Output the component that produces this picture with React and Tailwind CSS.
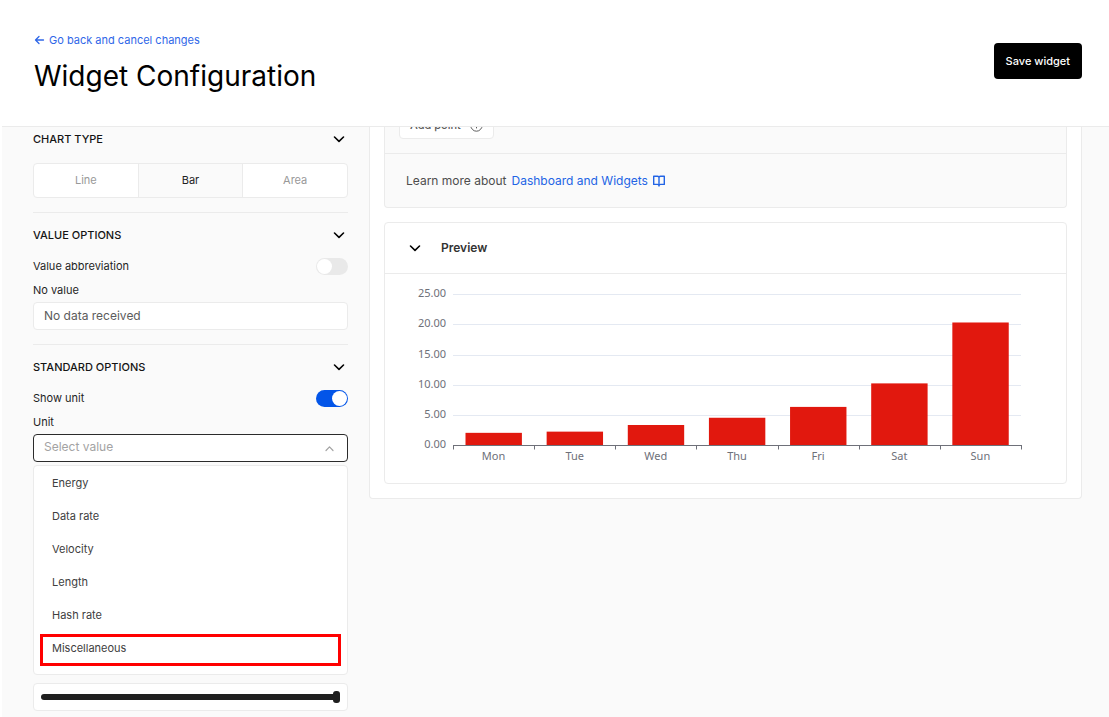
import { useState } from "react";

const UNITS = ["Energy", "Data rate", "Velocity", "Length", "Hash rate", "Miscellaneous"];
const CHART_TYPES = ["Line", "Bar", "Area"];

const TICKS = [25, 20, 15, 10, 5, 0];
const BARS = [
  { day: "Mon", value: 2.1 },
  { day: "Tue", value: 2.3 },
  { day: "Wed", value: 3.4 },
  { day: "Thu", value: 4.6 },
  { day: "Fri", value: 6.4 },
  { day: "Sat", value: 10.3 },
  { day: "Sun", value: 20.4 },
];

function Chevron({ className = "" }) {
  return (
    <svg className={className} width="12" height="12" viewBox="0 0 12 12" fill="none" stroke="currentColor" strokeWidth="1.6" strokeLinecap="round" strokeLinejoin="round" aria-hidden="true">
      <path d="M1.5 4 6 8.3 10.5 4" />
    </svg>
  );
}

function SectionTitle({ children }) {
  return (
    <h2>
      <button type="button" className="flex h-6 w-full items-center justify-between pr-[3px] text-[11px] font-medium text-[#141414]">
        {children}
        <Chevron className="text-black" />
      </button>
    </h2>
  );
}

function Toggle({ label, defaultChecked }) {
  return (
    <label className="mt-[7px] flex h-6 items-center justify-between">
      {label}
      <span className="relative flex">
        <input type="checkbox" role="switch" defaultChecked={defaultChecked} className="peer h-[17px] w-8 appearance-none rounded-full bg-[#e9e9e9] checked:bg-[#0355e8]" />
        <span className="pointer-events-none absolute top-px left-px size-[15px] rounded-full bg-white peer-checked:left-4" />
      </span>
    </label>
  );
}

function Divider() {
  return <hr className="mt-3.5 mb-2.5 border-[#ebebeb]" />;
}

function BarChart() {
  const left = 68;
  const step = 81.14;
  const base = 171.5;
  const perUnit = 6.03;
  return (
    <svg viewBox="0 0 681 209" className="block w-full font-['Noto_Sans','Open_Sans',sans-serif] text-[11px]" role="img" aria-label="Preview bar chart">
      {TICKS.map((t) => {
        const y = Math.round(base - t * perUnit - 0.5) + 0.5;
        return (
          <g key={t}>
            {t > 0 && <path d={`M${left} ${y}H636`} stroke="#e4e9f2" />}
            <text x="61" y={y + 2.5} textAnchor="end" fill="#6e7079">{t.toFixed(2)}</text>
          </g>
        );
      })}
      {BARS.map((b, i) => (
        <g key={b.day}>
          <rect x={left + i * step + 12.5} y={base - b.value * perUnit} width="56.4" height={b.value * perUnit} fill="#e1180e" />
          <text x={left + (i + 0.5) * step} y="186" textAnchor="middle" fill="#6e7079">{b.day}</text>
        </g>
      ))}
      <path d={`M${left} ${base}H637`} stroke="#6e7079" />
      {[0, 1, 2, 3, 4, 5, 6, 7].map((i) => (
        <path key={i} d={`M${Math.round(left + i * step) + 0.5} ${base}v4`} stroke="#6e7079" />
      ))}
    </svg>
  );
}

export default function App() {
  const [type, setType] = useState("Bar");
  const [open, setOpen] = useState(true);
  const [unit, setUnit] = useState("");

  return (
    <div className="flex h-screen flex-col overflow-hidden bg-white pl-0.5 font-['Inter','Liberation_Sans',sans-serif] text-[11px] text-[#1f1f1f]">
      <header className="flex h-[127px] shrink-0 items-start justify-between border-b border-[#ebebeb] pr-[27px] pl-8">
        <div className="pt-8">
          <a href="#back" className="flex h-4 items-center gap-1 text-[#2f67e8]">
            <svg width="11" height="10" viewBox="0 0 11 10" fill="none" stroke="currentColor" strokeWidth="1.3" strokeLinecap="round" strokeLinejoin="round" aria-hidden="true">
              <path d="M9.5 5H1.5M5 1.5 1.5 5 5 8.5" />
            </svg>
            Go back and cancel changes
          </a>
          <h1 className="mt-2.5 text-[28px] leading-9 text-black">Widget Configuration</h1>
        </div>
        <button type="button" className="mt-[43px] h-9 rounded bg-black px-3 font-medium text-white">Save widget</button>
      </header>

      <main className="flex min-h-0 flex-1 items-start gap-[21px] overflow-hidden bg-[#fafafa] pr-[27px] pl-[31px]">
        <aside className="w-[315px] shrink-0">
          <SectionTitle>CHART TYPE</SectionTitle>
          <div className="mt-3 flex h-[35px] divide-x divide-[#ebebeb] overflow-hidden rounded border border-[#ebebeb] bg-white">
            {CHART_TYPES.map((t) => (
              <button
                key={t}
                type="button"
                aria-pressed={t === type}
                onClick={() => setType(t)}
                className={t === type ? "flex-1 bg-[#fafafa] text-[#1f1f1f]" : "flex-1 text-[#999999]"}
              >
                {t}
              </button>
            ))}
          </div>
          <Divider />

          <SectionTitle>VALUE OPTIONS</SectionTitle>
          <Toggle label="Value abbreviation" />
          <label htmlFor="no-value" className="flex h-6 items-center">No value</label>
          <input id="no-value" type="text" defaultValue="No data received" className="block h-7 w-full rounded border border-[#ebebeb] bg-white px-2.5 pb-0.5 text-xs text-[#5c5c5c]" />
          <Divider />

          <SectionTitle>STANDARD OPTIONS</SectionTitle>
          <Toggle label="Show unit" defaultChecked />
          <label htmlFor="unit" className="flex h-6 items-center">Unit</label>
          <div className="relative">
            <select
              id="unit"
              value={unit}
              onChange={(e) => setUnit(e.target.value)}
              onMouseDown={(e) => {
                e.preventDefault();
                setOpen(!open);
              }}
              className="block h-7 w-full appearance-none rounded border border-[#2b2b2b] bg-white px-2.5 pb-0.5 text-xs text-[#a3a3a3]"
            >
              <option value="">Select value</option>
              {UNITS.map((u) => (
                <option key={u}>{u}</option>
              ))}
            </select>
            <svg className="pointer-events-none absolute top-2.5 right-3.5" width="9" height="9" viewBox="0 0 9 9" fill="none" stroke="#a3a3a3" strokeWidth="1.2" strokeLinecap="round" strokeLinejoin="round" aria-hidden="true">
              <path d="M1 6.5 4.5 2.8 8 6.5" />
            </svg>
          </div>
          {open && (
            <ul role="listbox" aria-label="Unit" className="mt-[3px] rounded border border-[#ebebeb] bg-white pt-px pb-[9px]">
              {UNITS.map((u) => (
                <li
                  key={u}
                  role="option"
                  aria-selected={u === unit}
                  onClick={() => setUnit(u)}
                  className="relative flex h-[33px] items-center px-[18px] text-[#404040]"
                >
                  {u}
                  {u === "Miscellaneous" && (
                    <span className="pointer-events-none absolute inset-x-1.5 top-0.5 h-8 border-3 border-[#ff0000]" />
                  )}
                </li>
              ))}
            </ul>
          )}
          <div className="mt-2 flex h-7 items-center rounded border border-[#ebebeb] bg-white px-[7px]">
            <input
              type="range"
              aria-label="Opacity"
              defaultValue="100"
              className="h-1.5 w-full appearance-none rounded-full bg-[#1f1f1f] [&::-webkit-slider-thumb]:h-3 [&::-webkit-slider-thumb]:w-[7px] [&::-webkit-slider-thumb]:appearance-none [&::-webkit-slider-thumb]:rounded-[3px] [&::-webkit-slider-thumb]:bg-[#1f1f1f]"
            />
          </div>
        </aside>

        <section className="-mt-4 min-w-0 flex-1 rounded-b border border-t-0 border-[#ebebeb] bg-white px-3.5 pb-3.5">
          <div className="rounded-b border border-t-0 border-[#ebebeb] bg-[#fafafa]">
            <div className="border-b border-[#ebebeb] px-3.5 pb-3.5">
              <button type="button" className="flex h-7 items-center gap-[9px] rounded border border-[#ebebeb] bg-white px-2.5 font-medium text-[#5c5c5c]">
                Add point
                <svg width="13" height="13" viewBox="0 0 13 13" fill="none" stroke="currentColor" strokeLinecap="round" aria-hidden="true">
                  <circle cx="6.5" cy="6.5" r="5.7" />
                  <path d="M6.5 4v5M4 6.5h5" />
                </svg>
              </button>
            </div>
            <p className="flex h-[53px] items-center gap-[5px] px-[21px] text-xs text-[#4d4d4d]">
              Learn more about
              <a href="#docs" className="flex items-center gap-[5px] text-[#2264e5]">
                Dashboard and Widgets
                <svg width="12" height="12" viewBox="0 0 12 12" fill="none" stroke="currentColor" strokeWidth="1.4" strokeLinejoin="round" aria-hidden="true">
                  <path d="M.7 1.2H4.5Q6 1.2 6 2.6 6 1.2 7.5 1.2H11.3V9.4H7.5Q6 9.4 6 11 6 9.4 4.5 9.4H.7ZM6 2.6V11" />
                </svg>
              </a>
            </p>
          </div>

          <div className="mt-3.5 rounded border border-[#ebebeb]">
            <h2 className="border-b border-[#ebebeb]">
              <button type="button" className="flex h-[50px] w-full items-center gap-5 px-6 text-xs font-semibold text-[#333333]">
                <Chevron className="text-black" />
                Preview
              </button>
            </h2>
            <BarChart />
          </div>
        </section>
      </main>
    </div>
  );
}
